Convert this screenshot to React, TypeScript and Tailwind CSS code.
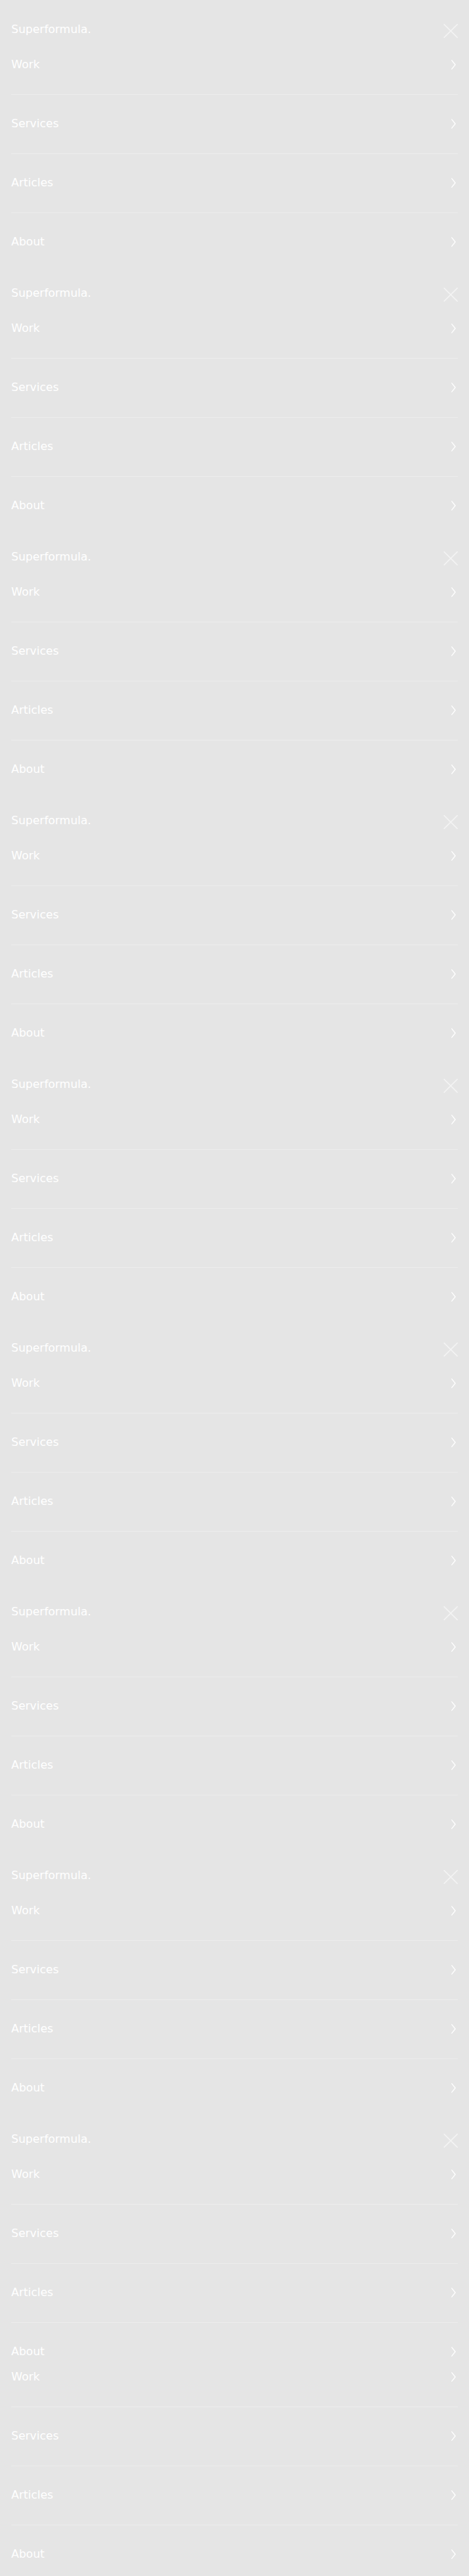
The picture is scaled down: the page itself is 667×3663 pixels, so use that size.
import React from "react";

const items = ["Work", "Services", "Articles", "About"];

function Chevron() {
  return (
    <svg width="8" height="14" viewBox="0 0 8 14" fill="none" className="mr-[2px] shrink-0">
      <path d="M1.5 0.8 L6.5 7 L1.5 13.2" stroke="#ffffff" strokeWidth="1.2" strokeLinecap="round" strokeLinejoin="round" />
    </svg>
  );
}

function CloseIcon() {
  return (
    <svg width="20" height="20" viewBox="0 0 20 20" fill="none" className="mt-[4px] shrink-0">
      <path d="M0.7 0.7 L19.3 19.3 M19.3 0.7 L0.7 19.3" stroke="#f4f4f4" strokeWidth="1.5" strokeLinecap="round" />
    </svg>
  );
}

function Nav({ className = "" }: { className?: string }) {
  return (
    <ul className={"px-4 " + className}>
      {items.map((label, i) => (
        <li
          key={label}
          className={
            "flex items-center justify-between pt-[29px] pb-[30px] " +
            (i < items.length - 1 ? "border-b border-[#ececec]" : "")
          }
        >
          <span className="text-[16px] leading-6 text-white">{label}</span>
          <Chevron />
        </li>
      ))}
    </ul>
  );
}

function Block() {
  return (
    <div className="h-[375px]">
      <header className="flex h-[51px] items-start justify-between px-4 pt-[30px]">
        <span className="text-[16px] leading-6 text-white">Superformula.</span>
        <CloseIcon />
      </header>
      <Nav />
    </div>
  );
}

export default function App() {
  return (
    <div
      className="h-[3663px] w-full overflow-hidden bg-[#e5e5e5]"
      style={{ fontFamily: '"DejaVu Sans", Verdana, sans-serif' }}
    >
      {Array.from({ length: 9 }).map((_, i) => (
        <Block key={i} />
      ))}
      <Nav className="-mt-[36px]" />
    </div>
  );
}
